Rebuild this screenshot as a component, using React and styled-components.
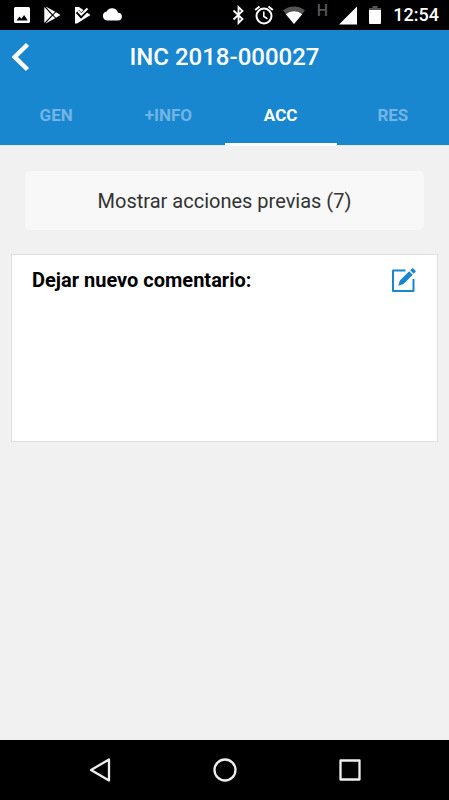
import React, { useState } from "react";
import styled, { createGlobalStyle } from "styled-components";

const BLUE = "#1986d0";

const GlobalStyle = createGlobalStyle`
  *, *::before, *::after { box-sizing: border-box; }
  body { margin: 0; background: #f1f1f1; font-family: Roboto, "Liberation Sans", sans-serif; }
  button, textarea { font: inherit; }
`;

const Screen = styled.div`
  display: flex;
  flex-direction: column;
  min-height: 100vh;
`;

const StatusBar = styled.div`
  display: flex;
  justify-content: space-between;
  height: 30px;
  padding: 0 10px 0 12px;
  background: #000;
  color: #fff;
`;

const StatusGroup = styled.div`
  display: flex;
  align-items: center;
  gap: ${({ $gap }) => $gap}px;
`;

const Carrier = styled.span`
  width: 16px;
  padding-bottom: 8px;
  color: #555;
  font-size: 16px;
  font-weight: 500;
  line-height: 22px;
  text-align: center;
`;

const Clock = styled.time`
  font-size: 18px;
  font-weight: 500;
  line-height: 30px;
`;

const Header = styled.header`
  display: grid;
  grid-template-columns: 44px 1fr 44px;
  align-items: center;
  height: 54px;
  background: ${BLUE};
  color: #fff;
`;

const IconButton = styled.button`
  display: flex;
  align-items: center;
  justify-content: center;
  padding: 0;
  border: 0;
  background: none;
  color: ${({ $color }) => $color};
  cursor: pointer;
`;

const Title = styled.h1`
  margin: 0;
  font-size: 24px;
  font-weight: 500;
  line-height: 32px;
  text-align: center;
`;

const Tabs = styled.div`
  display: grid;
  grid-template-columns: repeat(4, 1fr);
  height: 62px;
  background: linear-gradient(${BLUE} 61px, #e3eaef 61px);
`;

const Tab = styled.button`
  padding: 3px 0 0;
  border: 0;
  border-bottom: 3px solid ${({ $active }) => ($active ? "#fff" : "transparent")};
  background: none;
  color: ${({ $active }) => ($active ? "#fff" : "#73b5e2")};
  font-size: 17px;
  font-weight: 700;
  cursor: pointer;
`;

const Content = styled.main`
  display: flex;
  flex: 1;
  flex-direction: column;
  gap: 24px;
  padding: 25px 11px;
`;

const PreviousButton = styled.button`
  height: 59px;
  margin: 0 14px;
  border: 0;
  border-radius: 5px;
  background: #f8f8f8;
  color: #333;
  font-size: 20px;
  cursor: pointer;
`;

const CommentCard = styled.section`
  padding: 11px 21px 13px 20px;
  border: 1px solid #dfdfdf;
  background: #fff;
`;

const CommentHeading = styled.div`
  display: flex;
  align-items: center;
  justify-content: space-between;
  height: 28px;
`;

const CommentLabel = styled.label`
  color: #000;
  font-size: 20px;
  font-weight: 700;
  line-height: 28px;
`;

const CommentInput = styled.textarea`
  display: block;
  width: 100%;
  height: 134px;
  padding: 8px 0;
  border: 0;
  outline: 0;
  background: none;
  color: #333;
  font-size: 18px;
  resize: none;
`;

const NavBar = styled.nav`
  display: grid;
  grid-template-columns: repeat(3, 1fr);
  height: 60px;
  padding: 0 37px;
  background: #000;
`;

const ImageIcon = () => (
  <svg width="20" height="20" viewBox="0 0 20 20" aria-hidden="true">
    <path fill="#fff" fillRule="evenodd" d="M3.500 2h13A1.500 1.500 0 0 1 18 3.500v13a1.500 1.500 0 0 1-1.500 1.500h-13A1.500 1.500 0 0 1 2 16.500v-13A1.500 1.500 0 0 1 3.500 2zM4.500 15.500h11.200l-3.600-5.400-2.700 3.600-1.900-2.300z" />
  </svg>
);

const PlayIcon = () => (
  <svg width="20" height="20" viewBox="0 0 20 20" aria-hidden="true">
    <path fill="#fff" d="M2.300 2v16L9.800 10zM3.300 1.200 10.700 9.200 13.200 6.800zM3.300 18.800 10.700 10.800 13.200 13.200zM14 7.200 11.300 10 14 12.800 18.500 10z" />
  </svg>
);

const PlayCheckIcon = () => (
  <svg width="20" height="20" viewBox="0 0 20 20" aria-hidden="true">
    <path fill="#fff" d="M3 2h4l11.500 8L5 18.500H3z" />
    <path fill="none" stroke="#000" strokeWidth="4.500" d="m5.500 6.500 3.600 4L16.500 3" />
    <path fill="none" stroke="#fff" strokeWidth="2" d="m6 6 3.300 3.500L15.500 3.500" />
  </svg>
);

const CloudIcon = () => (
  <svg width="20" height="20" viewBox="0 0 20 20" aria-hidden="true">
    <path fill="#fff" d="M5 15.500a4.600 4.600 0 0 1-.3-9.100A6.200 6.200 0 0 1 16 7.700a3.900 3.900 0 0 1 0 7.800z" />
  </svg>
);

const BluetoothIcon = () => (
  <svg width="14" height="20" viewBox="0 0 14 20" fill="none" stroke="#fff" strokeWidth="1.800" aria-hidden="true">
    <path d="M2.500 5.500 11.500 14 7.500 18V2l4 4-9 8.500" />
  </svg>
);

const AlarmIcon = () => (
  <svg width="20" height="20" viewBox="0 0 20 20" fill="none" stroke="#fff" aria-hidden="true">
    <circle cx="10" cy="11" r="7.500" strokeWidth="2" />
    <path strokeWidth="1.600" d="M9.800 6.500v5l3.700 2.200" />
    <path strokeWidth="2" d="M1.200 5 5.500 1.500M18.800 5 14.500 1.500" />
  </svg>
);

const WifiIcon = () => (
  <svg width="22" height="20" viewBox="0 0 22 20" aria-hidden="true">
    <path fill="#555" d="M0 5.500a17 17 0 0 1 22 0L11 19z" />
    <path fill="#fff" d="M2.800 9.200a12.500 12.500 0 0 1 16.400 0L11 19z" />
  </svg>
);

const SignalIcon = () => (
  <svg width="18" height="20" viewBox="0 0 18 20" aria-hidden="true">
    <path fill="#fff" d="M18 1.500v18H0z" />
  </svg>
);

const BatteryIcon = () => (
  <svg width="12" height="20" viewBox="0 0 12 20" aria-hidden="true">
    <path fill="#555" d="M3.500 1h5v2H12v3H0V3h3.500z" />
    <path fill="#fff" d="M0 5h12v13a1 1 0 0 1-1 1H1a1 1 0 0 1-1-1z" />
  </svg>
);

const BackIcon = () => (
  <svg width="20" height="30" viewBox="0 0 20 30" fill="none" stroke="currentColor" strokeWidth="4.500" aria-hidden="true">
    <path d="M15.500 2.500 2.800 15l12.700 12.500" />
  </svg>
);

const EditIcon = () => (
  <svg width="24" height="24" viewBox="0 0 24 24" aria-hidden="true">
    <path fill="none" stroke="currentColor" strokeWidth="2" strokeLinejoin="round" d="M13.500 2.500H1V23h20.500V11" />
    <path fill="currentColor" d="m6.300 17.700 1.600-5.300L17.200 3.300l3.600 3.400-9.300 9.300zM18.200 2.300l1.700-1.700a1 1 0 0 1 1.400 0l2.100 2a1 1 0 0 1 0 1.400l-1.700 1.800z" />
  </svg>
);

const NavIcon = ({ children }) => (
  <svg width="26" height="26" viewBox="0 0 26 26" fill="none" stroke="currentColor" strokeWidth="2.300" strokeLinejoin="round" aria-hidden="true">
    {children}
  </svg>
);

const TABS = ["GEN", "+INFO", "ACC", "RES"];

export default function App() {
  const [active, setActive] = useState("ACC");
  const [comment, setComment] = useState("");

  return (
    <>
      <GlobalStyle />
      <Screen>
        <StatusBar>
          <StatusGroup $gap={10}>
            <ImageIcon />
            <PlayIcon />
            <PlayCheckIcon />
            <CloudIcon />
          </StatusGroup>
          <StatusGroup $gap={12}>
            <StatusGroup $gap={9}>
              <BluetoothIcon />
              <AlarmIcon />
              <WifiIcon />
              <Carrier>H</Carrier>
              <SignalIcon />
            </StatusGroup>
            <BatteryIcon />
            <Clock>12:54</Clock>
          </StatusGroup>
        </StatusBar>
        <Header>
          <IconButton $color="#fff" aria-label="Volver">
            <BackIcon />
          </IconButton>
          <Title>INC 2018-000027</Title>
        </Header>
        <Tabs role="tablist">
          {TABS.map((name) => (
            <Tab
              key={name}
              role="tab"
              aria-selected={name === active}
              $active={name === active}
              onClick={() => setActive(name)}
            >
              {name}
            </Tab>
          ))}
        </Tabs>
        <Content>
          <PreviousButton>Mostrar acciones previas (7)</PreviousButton>
          <CommentCard>
            <CommentHeading>
              <CommentLabel htmlFor="comment">Dejar nuevo comentario:</CommentLabel>
              <IconButton $color={BLUE} aria-label="Editar comentario">
                <EditIcon />
              </IconButton>
            </CommentHeading>
            <CommentInput id="comment" value={comment} onChange={(e) => setComment(e.target.value)} />
          </CommentCard>
        </Content>
        <NavBar>
          <IconButton $color="#eee" aria-label="Atrás">
            <NavIcon>
              <path d="M22 2.500v21L4 13z" />
            </NavIcon>
          </IconButton>
          <IconButton $color="#eee" aria-label="Inicio">
            <NavIcon>
              <circle cx="13" cy="13" r="10.500" />
            </NavIcon>
          </IconButton>
          <IconButton $color="#eee" aria-label="Recientes">
            <NavIcon>
              <path d="M3.500 3.500h19v19h-19z" />
            </NavIcon>
          </IconButton>
        </NavBar>
      </Screen>
    </>
  );
}
